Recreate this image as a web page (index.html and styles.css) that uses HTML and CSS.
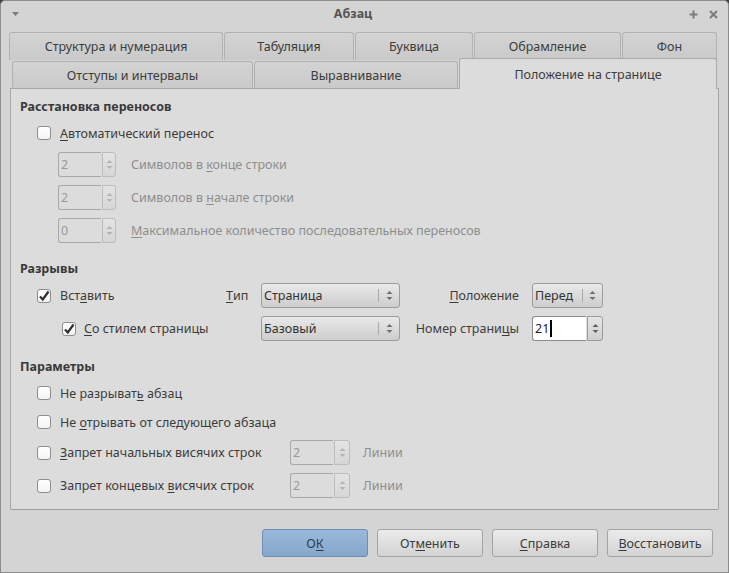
FILE: index.html
```html
<!DOCTYPE html>
<html lang="ru">
<head>
<meta charset="utf-8">
<title>Абзац</title>
<link rel="stylesheet" href="styles.css">
</head>
<body>
<div class="window">
  <div class="titlebar">
    <div class="tb-left">
      <svg width="7" height="4" viewBox="0 0 7 4"><polygon points="0,0 7,0 3.5,4" fill="#7a7a7a"/></svg>
    </div>
    <div class="title">Абзац</div>
    <div class="tb-right">
      <svg class="tb-plus" width="9" height="9" viewBox="0 0 9 9"><path d="M4.5 0.5V8.5M0.5 4.5H8.5" stroke="#7b7b7b" stroke-width="2"/></svg>
      <svg class="tb-close" width="9" height="9" viewBox="0 0 9 9"><path d="M1 1L8 8M8 1L1 8" stroke="#7b7b7b" stroke-width="2"/></svg>
    </div>
  </div>

  <div class="tabrow row1">
    <div class="tab t1">Структура и нумерация</div>
    <div class="tab t2">Табуляция</div>
    <div class="tab t3">Буквица</div>
    <div class="tab t4">Обрамление</div>
    <div class="tab t5">Фон</div>
  </div>
  <div class="tabrow row2">
    <div class="tab t6">Отступы и интервалы</div>
    <div class="tab t7">Выравнивание</div>
    <div class="tab active t8">Положение на странице</div>
  </div>

  <div class="panel">
    <div class="heading">Расстановка переносов</div>
    <div class="row cbrow r-auto">
      <span class="cb"></span>
      <span class="lbl"><u>А</u>втоматический перенос</span>
    </div>
    <div class="row spinrow r-s1">
      <div class="spin dis sp-small">
        <div class="spin-input">2</div>
        <div class="spin-btn"><svg width="7" height="11" viewBox="0 0 7 11"><polygon points="0.5,4 3.5,1 6.5,4" fill="#b4b4b4"/><polygon points="0.5,7 3.5,10 6.5,7" fill="#b4b4b4"/></svg></div>
      </div>
      <span class="lbl dim">Символов в <u>к</u>онце строки</span>
    </div>
    <div class="row spinrow r-s2">
      <div class="spin dis sp-small">
        <div class="spin-input">2</div>
        <div class="spin-btn"><svg width="7" height="11" viewBox="0 0 7 11"><polygon points="0.5,4 3.5,1 6.5,4" fill="#b4b4b4"/><polygon points="0.5,7 3.5,10 6.5,7" fill="#b4b4b4"/></svg></div>
      </div>
      <span class="lbl dim">Символов в <u>н</u>ачале строки</span>
    </div>
    <div class="row spinrow r-s2">
      <div class="spin dis sp-small">
        <div class="spin-input">0</div>
        <div class="spin-btn"><svg width="7" height="11" viewBox="0 0 7 11"><polygon points="0.5,4 3.5,1 6.5,4" fill="#b4b4b4"/><polygon points="0.5,7 3.5,10 6.5,7" fill="#b4b4b4"/></svg></div>
      </div>
      <span class="lbl dim"><u>М</u>аксимальное количество последовательных переносов</span>
    </div>

    <div class="heading h-next">Разрывы</div>
    <div class="breaks">
      <div class="bcell c-first">
        <span class="cb checked"><svg width="14" height="14" viewBox="0 0 14 14"><path d="M3 7.5L5.8 10.5L11.5 2.5" fill="none" stroke="#2f2f2f" stroke-width="2.2"/></svg></span>
        <span class="lbl">Вст<u>а</u>вить</span>
      </div>
      <div class="bcell"><u>Т</u>ип</div>
      <div class="select">
        <span class="sel-text">Страница</span>
        <span class="sel-sep"></span>
        <svg width="7" height="11" viewBox="0 0 7 11"><polygon points="0.5,4 3.5,1 6.5,4" fill="#6f6f6f"/><polygon points="0.5,7 3.5,10 6.5,7" fill="#6f6f6f"/></svg>
      </div>
      <div class="bcell right"><u>П</u>оложение</div>
      <div class="select small">
        <span class="sel-text">Перед</span>
        <span class="sel-sep"></span>
        <svg width="7" height="11" viewBox="0 0 7 11"><polygon points="0.5,4 3.5,1 6.5,4" fill="#6f6f6f"/><polygon points="0.5,7 3.5,10 6.5,7" fill="#6f6f6f"/></svg>
      </div>

      <div class="bcell c-second">
        <span class="cb checked"><svg width="14" height="14" viewBox="0 0 14 14"><path d="M3 7.5L5.8 10.5L11.5 2.5" fill="none" stroke="#2f2f2f" stroke-width="2.2"/></svg></span>
        <span class="lbl"><u>С</u>о стилем страницы</span>
      </div>
      <div class="bcell"></div>
      <div class="select">
        <span class="sel-text">Базовый</span>
        <span class="sel-sep"></span>
        <svg width="7" height="11" viewBox="0 0 7 11"><polygon points="0.5,4 3.5,1 6.5,4" fill="#6f6f6f"/><polygon points="0.5,7 3.5,10 6.5,7" fill="#6f6f6f"/></svg>
      </div>
      <div class="bcell right">Номер страни<u>ц</u>ы</div>
      <div class="spin live">
        <div class="spin-input">21<span class="caret"></span></div>
        <div class="spin-btn"><svg width="7" height="11" viewBox="0 0 7 11"><polygon points="0.5,4 3.5,1 6.5,4" fill="#5f5f5f"/><polygon points="0.5,7 3.5,10 6.5,7" fill="#5f5f5f"/></svg></div>
      </div>
    </div>

    <div class="heading h-next">Параметры</div>
    <div class="row cbrow r-p1">
      <span class="cb"></span>
      <span class="lbl">Не разрыват<u>ь</u> абзац</span>
    </div>
    <div class="row cbrow r-p2">
      <span class="cb"></span>
      <span class="lbl">Не <u>о</u>трывать от следующего абзаца</span>
    </div>
    <div class="row prow r-p3">
      <div class="pcell">
        <span class="cb"></span>
        <span class="lbl"><u>З</u>апрет начальных висячих строк</span>
      </div>
      <div class="spin dis sp-param">
        <div class="spin-input">2</div>
        <div class="spin-btn"><svg width="7" height="11" viewBox="0 0 7 11"><polygon points="0.5,4 3.5,1 6.5,4" fill="#b4b4b4"/><polygon points="0.5,7 3.5,10 6.5,7" fill="#b4b4b4"/></svg></div>
      </div>
      <span class="lbl dim unit">Линии</span>
    </div>
    <div class="row prow r-p4">
      <div class="pcell">
        <span class="cb"></span>
        <span class="lbl">Запрет концевых <u>в</u>исячих строк</span>
      </div>
      <div class="spin dis sp-param">
        <div class="spin-input">2</div>
        <div class="spin-btn"><svg width="7" height="11" viewBox="0 0 7 11"><polygon points="0.5,4 3.5,1 6.5,4" fill="#b4b4b4"/><polygon points="0.5,7 3.5,10 6.5,7" fill="#b4b4b4"/></svg></div>
      </div>
      <span class="lbl dim unit">Линии</span>
    </div>
  </div>

  <div class="buttons">
    <div class="btn ok">О<u>К</u></div>
    <div class="btn">От<u>м</u>енить</div>
    <div class="btn"><u>С</u>правка</div>
    <div class="btn"><u>В</u>осстановить</div>
  </div>
</div>
</body>
</html>
```

FILE: styles.css
```css
* { box-sizing: border-box; }

html, body {
  margin: 0;
  padding: 0;
  background: #3f3f3f;
}

body {
  font-family: "Noto Sans", "DejaVu Sans", sans-serif;
  font-size: 12.5px;
  color: #3c3c3c;
}

u {
  text-decoration: underline;
  text-decoration-thickness: 1px;
  text-underline-offset: 2px;
}

.window {
  width: 729px;
  height: 573px;
  background: #d4d4d4;
  border: 1px solid #8c8c8c;
  border-radius: 5px 5px 0 0;
  display: flex;
  flex-direction: column;
  overflow: hidden;
}

/* title bar */
.titlebar {
  height: 31px;
  flex: none;
  display: flex;
  align-items: flex-start;
  padding-top: 4px;
}
.tb-left {
  width: 26px;
  height: 18px;
  padding-left: 11px;
  display: flex;
  align-items: center;
}
.title {
  flex: 1;
  text-align: center;
  font-weight: bold;
  line-height: 18px;
  color: #555555;
}
.tb-right {
  width: 49px;
  height: 18px;
  display: flex;
  align-items: center;
}
.tb-plus { margin-left: 10px; }
.tb-close { margin-left: 11px; }

/* tabs */
.tabrow {
  display: flex;
  gap: 1px;
  flex: none;
}
.row1 { margin-left: 8px; height: 28px; }
.row2 { margin-left: 11px; height: 28px; }

.tab {
  display: flex;
  align-items: center;
  justify-content: center;
  border: 1px solid #b2b2b2;
  border-bottom: none;
  border-radius: 3px 3px 0 0;
  background: linear-gradient(#d3d3d3, #cacaca);
  color: #3c3c3c;
  white-space: nowrap;
}
.row1 .tab { height: 28px; }
.row2 .tab { height: 27px; margin-top: 1px; }
.row2 .tab.active {
  height: 31px;
  margin-top: -2px;
  background: #dcdcdc;
  border-color: #ababab;
  position: relative;
  z-index: 1;
}
.t1 { width: 214px; }
.t2 { width: 130px; }
.t3 { width: 118px; }
.t4 { width: 147px; }
.t5 { width: 95px; }
.t6 { width: 241px; }
.t7 { width: 204px; }
.t8 { width: 258px; }

/* panel */
.panel {
  flex: none;
  margin-left: 9px;
  width: 709px;
  height: 422px;
  background: #dcdcdc;
  border: 1px solid #a8a8a8;
  border-bottom-color: #9c9c9c;
  border-radius: 0 0 2px 2px;
  padding: 9px 0 0 9px;
}

.heading {
  font-weight: bold;
  line-height: 18px;
  height: 18px;
  color: #3a3a3a;
}
.h-next { margin-top: 17px; }

.row {
  display: flex;
  align-items: center;
}
.cbrow { height: 24px; }
.spinrow { height: 25px; }
.prow { height: 25px; }

.r-auto { margin-top: 5px; }
.r-s1 { margin-top: 7px; }
.r-s2 { margin-top: 8px; }
.r-p1 { margin-top: 5px; }
.r-p2 { margin-top: 5px; }
.r-p3 { margin-top: 6px; }
.r-p4 { margin-top: 8px; }

.cb {
  width: 14px;
  height: 14px;
  flex: none;
  border: 1px solid #8e8e8e;
  border-radius: 3px;
  background: linear-gradient(#ffffff, #f3f3f3);
  display: inline-flex;
  align-items: center;
  justify-content: center;
  overflow: visible;
}
.cb svg { flex: none; margin: -1px; }
.cbrow .cb, .pcell .cb, .c-first .cb { margin-left: 17px; }
.c-second .cb { margin-left: 42px; }

.lbl { margin-left: 9px; white-space: nowrap; }
.c-second .lbl { margin-left: 8px; }
.dim { color: #8e8e8e; }

/* spin boxes */
.spin {
  display: flex;
  height: 25px;
  flex: none;
}
.spin-input {
  height: 25px;
  border: 1px solid #a9a9a9;
  border-right: none;
  border-radius: 3px 0 0 3px;
  display: flex;
  align-items: center;
  padding-left: 2px;
}
.spin-btn {
  height: 25px;
  border: 1px solid #b3b3b3;
  border-radius: 0 3px 3px 0;
  background: linear-gradient(#e6e6e6, #cfcfcf);
  display: flex;
  align-items: center;
  justify-content: center;
  margin-left: 1px;
}
.spin.dis .spin-input { color: #9a9a9a; background: #dcdcdc; }
.spin.dis .spin-btn { border-color: #bcbcbc; background: linear-gradient(#e4e4e4, #d6d6d6); }

.sp-small { margin-left: 38px; }
.sp-small .spin-input { width: 43px; }
.sp-small .spin-btn { width: 14px; }
.spinrow .lbl { margin-left: 15px; }

.sp-param .spin-input { width: 43px; }
.sp-param .spin-btn { width: 16px; }
.unit { margin-left: 13px; }
.pcell {
  width: 270px;
  display: flex;
  align-items: center;
}

/* breaks grid */
.breaks {
  display: grid;
  grid-template-columns: 206px 35px 139px 132px 71px;
  grid-template-rows: 25px 25px;
  row-gap: 8px;
  margin-top: 5px;
}
.bcell {
  display: flex;
  align-items: center;
  white-space: nowrap;
}
.bcell.right {
  justify-content: flex-end;
  padding-right: 13px;
}

.select {
  display: flex;
  align-items: center;
  height: 25px;
  border: 1px solid #9d9d9d;
  border-radius: 3px;
  background: linear-gradient(#e9e9e9, #cdcdcd);
  padding: 0 0 0 2px;
  color: #333333;
}
.sel-text { flex: 1; white-space: nowrap; }
.sel-sep {
  width: 1px;
  height: 13px;
  background: #aaaaaa;
  margin-right: 7px;
}
.select svg { margin-right: 6px; }
.select.small .sel-sep { margin-right: 6px; }
.select.small svg { margin-right: 6px; }

.spin.live .spin-input {
  width: 54px;
  background: #ffffff;
  border-color: #8d8d8d;
  color: #222222;
}
.spin.live .spin-btn {
  width: 16px;
  border-color: #9d9d9d;
}
.caret {
  display: inline-block;
  width: 2px;
  height: 17px;
  background: #000000;
  margin-left: 1px;
}

/* dialog buttons */
.buttons {
  flex: none;
  display: flex;
  justify-content: flex-end;
  gap: 9px;
  margin-top: 19px;
  padding-right: 15px;
}
.btn {
  width: 106px;
  height: 28px;
  border: 1px solid #a3a3a3;
  border-radius: 3px;
  background: linear-gradient(#ebebeb, #d3d3d3);
  display: flex;
  align-items: center;
  justify-content: center;
  color: #3c3c3c;
}
.btn.ok {
  background: linear-gradient(#9ab8d9, #86a7cc);
  border-color: #6d8db3;
  color: #2f3b4a;
}
```
